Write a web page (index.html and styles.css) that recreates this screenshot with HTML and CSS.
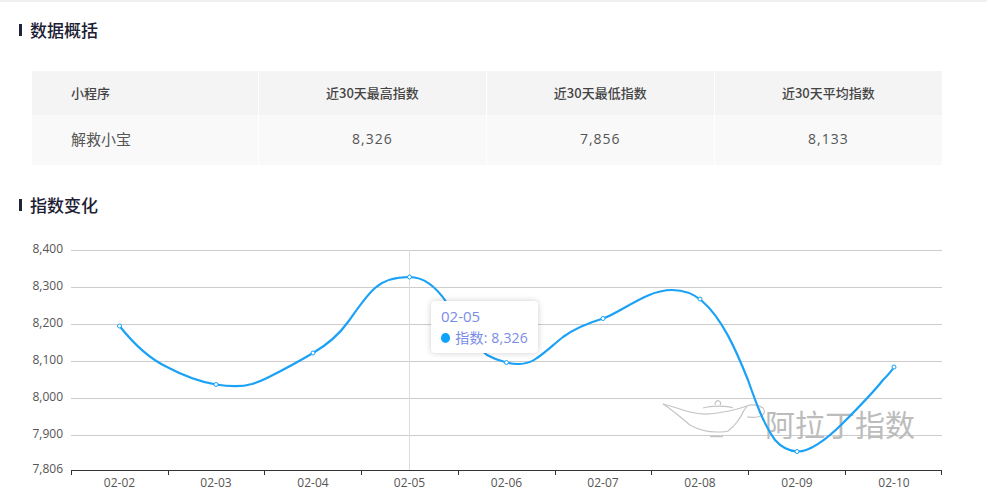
FILE: index.html
```html
<!DOCTYPE html>
<html lang="zh-CN">
<head>
<meta charset="utf-8">
<title>数据概括</title>
<link rel="stylesheet" href="styles.css">
</head>
<body>
<main class="page">
  <h2 class="section-title">数据概括</h2>
  <table class="summary">
    <thead>
      <tr><th class="first">小程序</th><th>近30天最高指数</th><th>近30天最低指数</th><th>近30天平均指数</th></tr>
    </thead>
    <tbody>
      <tr><td class="first name">解救小宝</td><td>8,326</td><td>7,856</td><td>8,133</td></tr>
    </tbody>
  </table>
  <h2 class="section-title second">指数变化</h2>
  <div class="chart">
    <svg class="plot" width="987" height="292" viewBox="0 207 987 292" xmlns="http://www.w3.org/2000/svg">
      <g class="grid">
        <path d="M71 250.5H942M71 287.5H942M71 324.5H942M71 361.5H942M71 398.5H942M71 435.5H942"/>
      </g>
      <path class="pointer" d="M409.5 250V470"/>
      <g class="ylabels" text-anchor="end">
        <text x="63" y="253">8,400</text>
        <text x="63" y="290">8,300</text>
        <text x="63" y="327">8,200</text>
        <text x="63" y="364">8,100</text>
        <text x="63" y="401">8,000</text>
        <text x="63" y="438">7,900</text>
        <text x="63" y="473">7,806</text>
      </g>
      <path class="axis" d="M71 470.5H942M71.5 470V475M168.5 470V475M264.5 470V475M361.5 470V475M458.5 470V475M555.5 470V475M651.5 470V475M748.5 470V475M845.5 470V475M941.5 470V475"/>
      <g class="xlabels" text-anchor="middle">
        <text x="119.5" y="487">02-02</text>
        <text x="216" y="487">02-03</text>
        <text x="313" y="487">02-04</text>
        <text x="409.5" y="487">02-05</text>
        <text x="506.5" y="487">02-06</text>
        <text x="603" y="487">02-07</text>
        <text x="700" y="487">02-08</text>
        <text x="797" y="487">02-09</text>
        <text x="894" y="487">02-10</text>
      </g>
      <g class="teapot">
        <path d="M663 404C672 406 682 410 690 412C697 414 710 415 723 412C732 411 741 408 747 406C752 404 759 405 763 408C766 412 764 416 757 417C753 418 750 417 747 417"/>
        <path d="M663 404C670 408 680 417 690 425C697 429 707 432 717 432C722 432 726 432 728 431C732 428 735 425 737 422C740 418 742 415 743 412C744 410 746 408 747 406"/>
        <path d="M703 408C710 406 726 405 733 408"/>
        <path d="M715 405C715 402 717 400 719 401C721 402 721 404 720 405"/>
        <path class="base" d="M710 436.5H723"/>
      </g>
      <text class="mark" x="765" y="436">阿拉丁指数</text>
      <path class="line" d="M119.5 326C133 343 150 359 167 367C184 376 200 382 216 384.5C228 386.5 242 387 252 384C258 382 263 380 267 378C283 370 298 362 313 353C325 346 338 336 348 322C358 308 366 296 375 288C384 280 397 277 409.5 277C425 277 437 288 447 303C456 318 470 342 487 355C494 359 500 361 506.5 362.5C515 364.5 528 365 537 358C546 352 553 345 563 337C574 329 588 323 603 318.5C622 312 646 290 672 290C684 290 694 294 702 301C722 318 736 350 748 380C756 403 764 425 775 440C782 448 790 451 797 451.5C812 452 830 436 843 423C858 408 872 394 883 380C887 376 891 372 894 367"/>
      <g class="dots">
        <circle cx="119.5" cy="326" r="2"/>
        <circle cx="216" cy="384.5" r="2"/>
        <circle cx="313" cy="353" r="2"/>
        <circle cx="409.5" cy="277" r="2"/>
        <circle cx="506.5" cy="362.5" r="2"/>
        <circle cx="603" cy="318.5" r="2"/>
        <circle cx="700" cy="299" r="2"/>
        <circle cx="797" cy="451.5" r="2"/>
        <circle cx="894" cy="367" r="2"/>
      </g>
    </svg>
    <div class="tooltip">
      <div class="tip-date">02-05</div>
      <div class="tip-row"><span class="tip-dot"></span>指数: 8,326</div>
    </div>
  </div>
</main>
</body>
</html>
```
FILE: styles.css
```css
* { box-sizing: border-box; }
html, body { margin: 0; padding: 0; background: #fff; }
body {
  width: 987px;
  height: 499px;
  overflow: hidden;
  font-family: "Open Sans", "Noto Sans CJK SC", sans-serif;
  color: #444;
}
.page {
  border-top: 2px solid #f0f0f0;
  padding: 18px 45px 0 19px;
}
.section-title {
  display: flex;
  align-items: center;
  margin: 0;
  height: 20px;
  font-size: 17px;
  line-height: 20px;
  font-weight: 500;
  color: #1b2033;
  font-family: "Noto Sans CJK SC", sans-serif;
}
.section-title::before {
  content: "";
  width: 3px;
  height: 12px;
  margin-right: 8px;
  background: #1f2438;
}
.second { margin-top: 30px; }
.summary {
  width: 910px;
  margin: 31px 0 0 13px;
  border-collapse: collapse;
  table-layout: fixed;
}
.summary th, .summary td {
  border-left: 1px solid #fff;
  text-align: center;
  padding: 0;
}
.summary th:first-child, .summary td:first-child { border-left: 0; }
.summary th {
  height: 44px;
  padding-bottom: 2px;
  background: #f4f4f4;
  font-family: "Noto Sans CJK SC", sans-serif;
  font-size: 13px;
  font-weight: 500;
  color: #444;
}
.summary td {
  height: 50px;
  padding-bottom: 3px;
  background: #f9f9f9;
  font-size: 14px;
  letter-spacing: 1px;
  color: #555;
}
.summary .first { width: 226.5px; text-align: left; padding-left: 39px; }
.summary .name { font-family: "Noto Sans CJK SC", sans-serif; letter-spacing: 0; font-size: 15px; padding-bottom: 3px; }
.chart { position: relative; height: 292px; margin: 0 -45px 0 -19px; }
.plot { position: absolute; left: 0; top: -8px; display: block; }
.grid path { stroke: #ccc; stroke-width: 1; fill: none; }
.pointer { stroke: #ddd; stroke-width: 1; fill: none; }
.axis { stroke: #333; stroke-width: 1; fill: none; }
.ylabels text, .xlabels text { font-family: "Open Sans", sans-serif; font-size: 12px; fill: #555; }
.teapot path { fill: none; stroke: #c4c4c4; stroke-width: 1.2; }
.teapot .base { stroke-width: 1.5; }
.mark {
  font-family: "Noto Sans CJK SC", sans-serif;
  font-size: 30px;
  font-weight: 400;
  fill: #bcbcbc;
}
.line { fill: none; stroke: #1ba1f5; stroke-width: 2.2; }
.dots circle { fill: #fff; stroke: #1ba1f5; stroke-width: 1; }
.tooltip {
  position: absolute;
  left: 431px;
  top: 86px;
  width: 107px;
  height: 52px;
  padding: 5px 10px;
  background: #fff;
  border-radius: 4px;
  box-shadow: 0 0 6px rgba(0, 0, 0, 0.2);
  color: #7a8ce8;
  font-family: "Open Sans", "Noto Sans CJK SC", sans-serif;
  font-size: 14px;
  line-height: 21px;
}
.tip-date { font-size: 15px; }
.tip-row { display: flex; align-items: center; white-space: nowrap; letter-spacing: 0.2px; }
.tip-dot {
  width: 10px;
  height: 10px;
  margin-right: 5px;
  border-radius: 50%;
  background: #0ea2fb;
}
```
